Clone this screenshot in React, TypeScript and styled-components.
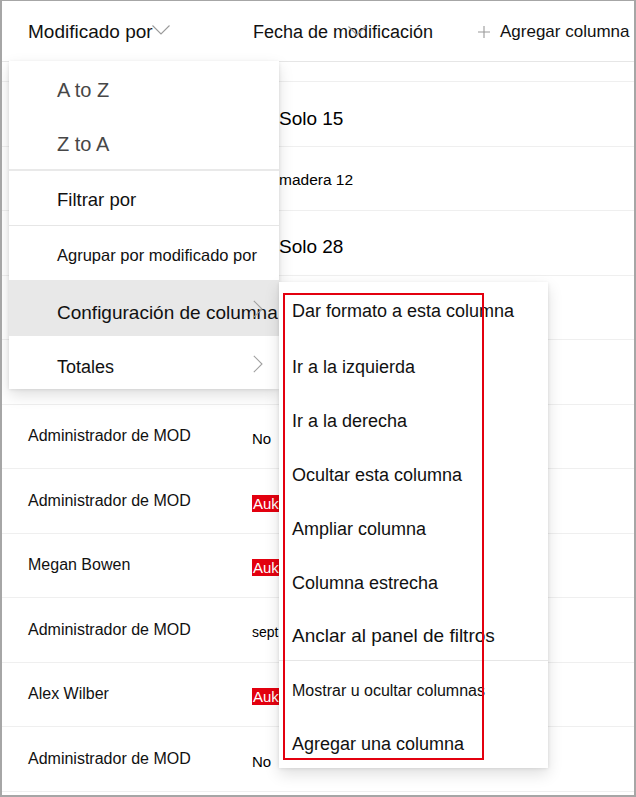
import React from "react";
import styled, { createGlobalStyle } from "styled-components";

const Global = createGlobalStyle`
  html, body { margin: 0; padding: 0; background: #fff; }
  body { font-family: "Liberation Sans", Arial, sans-serif; color: #111; }
  * { box-sizing: border-box; }
`;

const Frame = styled.div`
  position: relative;
  width: 636px;
  height: 797px;
  border: 2px solid #a6a6a6;
  border-top-width: 1px;
  overflow: hidden;
  background: #fff;
`;

const Header = styled.div`
  display: grid;
  grid-template-columns: 225px 225px 1fr;
  padding-left: 26px;
  height: 61px;
  border-bottom: 1px solid #e6e6e6;
  align-items: center;
`;

const HeaderCell = styled.div<{ $size: number }>`
  position: relative;
  display: flex;
  align-items: center;
  gap: 10px;
  font-size: ${(p) => p.$size}px;
  color: #111;
  white-space: nowrap;
  padding-top: 2px;
`;

const HeaderChevron = styled.svg<{ $left: number; $top: number }>`
  position: absolute;
  left: ${(p) => p.$left}px;
  top: ${(p) => p.$top}px;
  width: 18px;
  height: 10px;
  overflow: visible;
`;

const Row = styled.div<{ $h: number }>`
  display: grid;
  grid-template-columns: 225px 225px 1fr;
  padding-left: 26px;
  height: ${(p) => p.$h}px;
  border-bottom: 1px solid #efefef;
  align-items: center;
`;

const NameCell = styled.div`
  font-size: 16px;
  color: #111;
  white-space: nowrap;
`;

const ValueCell = styled.div<{ $size: number; $offset: number; $pt: number }>`
  font-size: ${(p) => p.$size}px;
  padding-left: ${(p) => p.$offset}px;
  padding-top: ${(p) => p.$pt}px;
  color: #000;
  white-space: nowrap;
  margin-left: -1px;
`;

const Flag = styled.span`
  background: #e3000f;
  color: #fff;
  padding: 0 1px;
`;

const Menu = styled.div`
  position: absolute;
  left: 7px;
  top: 60px;
  width: 270px;
  height: 328px;
  background: #fff;
  box-shadow: 0 6.4px 14.4px rgba(0, 0, 0, 0.13), 0 1.2px 3.6px rgba(0, 0, 0, 0.11);
  display: flex;
  flex-direction: column;
  z-index: 2;
`;

const MenuItem = styled.div<{
  $h: number;
  $size: number;
  $pt?: number;
  $muted?: boolean;
  $active?: boolean;
  $line?: boolean;
}>`
  position: relative;
  display: flex;
  align-items: center;
  height: ${(p) => p.$h}px;
  flex: none;
  padding-left: 48px;
  padding-top: ${(p) => p.$pt ?? 4}px;
  font-size: ${(p) => p.$size}px;
  color: ${(p) => (p.$muted ? "#474747" : "#111")};
  background: ${(p) => (p.$active ? "#e8e8e8" : "transparent")};
  border-bottom: ${(p) => (p.$line ? "1px solid #e6e6e6" : "none")};
  white-space: nowrap;
`;

const GroupGap = styled.div`
  height: 2px;
  flex: none;
  background: #e9e9e9;
`;

const Chevron = styled.svg`
  position: absolute;
  left: 244px;
  top: 50%;
  margin-top: -8px;
  width: 10px;
  height: 18px;
`;

const SubMenu = styled.div`
  position: absolute;
  left: 277px;
  top: 281px;
  width: 269px;
  height: 486px;
  background: #fff;
  box-shadow: 0 6.4px 14.4px rgba(0, 0, 0, 0.13), 0 1.2px 3.6px rgba(0, 0, 0, 0.11);
  padding-top: 2px;
  display: flex;
  flex-direction: column;
  z-index: 3;
`;

const SubItem = styled.div<{ $h: number; $size: number; $pt: number; $line?: boolean }>`
  display: flex;
  align-items: center;
  flex: none;
  height: ${(p) => p.$h}px;
  padding-left: 13px;
  padding-top: ${(p) => p.$pt}px;
  font-size: ${(p) => p.$size}px;
  color: #111;
  white-space: nowrap;
  border-bottom: ${(p) => (p.$line ? "1px solid #e6e6e6" : "none")};
`;

const Highlight = styled.div`
  position: absolute;
  left: 4px;
  top: 11px;
  width: 201px;
  height: 467px;
  border: 2px solid #e3000f;
  pointer-events: none;
`;

const Down = ({ left, top }: { left: number; top: number }) => (
  <HeaderChevron $left={left} $top={top} viewBox="0 0 18 10">
    <path d="M0.5 0.5 L9 9 L17.5 0.5" fill="none" stroke="#9a9a9a" strokeWidth="1.1" />
  </HeaderChevron>
);

const Right = () => (
  <Chevron viewBox="0 0 10 18">
    <path d="M0.8 0.8 L9 9 L0.8 17.2" fill="none" stroke="#a0a0a0" strokeWidth="1.1" />
  </Chevron>
);

const Plus = () => (
  <svg width="12" height="12" viewBox="0 0 12 12">
    <path d="M6 0 V12 M0 6 H12" stroke="#9a9a9a" strokeWidth="1.1" />
  </svg>
);

type RowData = { name: string; value?: React.ReactNode; size?: number; offset?: number; pt?: number };

const rows: RowData[] = [
  { name: "", value: "Solo 15", size: 19, offset: 27, pt: 10 },
  { name: "", value: "madera 12", size: 15.5, offset: 27, pt: 4 },
  { name: "", value: "Solo 28", size: 19, offset: 27, pt: 9 },
  { name: "" },
  { name: "" },
  { name: "Administrador de MOD", value: "No", size: 15 },
  { name: "Administrador de MOD", value: <Flag>Auk</Flag>, size: 15 },
  { name: "Megan Bowen", value: <Flag>Auk</Flag>, size: 15 },
  { name: "Administrador de MOD", value: "sept.", size: 14 },
  { name: "Alex Wilber", value: <Flag>Auk</Flag>, size: 15 },
  { name: "Administrador de MOD", value: "No", size: 15 },
  { name: "" },
];

const subItems: { label: string; size: number; h: number; pt: number; line?: boolean }[] = [
  { label: "Dar formato a esta columna", size: 18, h: 55, pt: 0 },
  { label: "Ir a la izquierda", size: 18, h: 54, pt: 2 },
  { label: "Ir a la derecha", size: 18, h: 54, pt: 2 },
  { label: "Ocultar esta columna", size: 18, h: 54, pt: 2 },
  { label: "Ampliar columna", size: 18, h: 54, pt: 2 },
  { label: "Columna estrecha", size: 18, h: 54, pt: 2 },
  { label: "Anclar al panel de filtros", size: 19, h: 52, pt: 2, line: true },
  { label: "Mostrar u ocultar columnas", size: 16, h: 54, pt: 5 },
  { label: "Agregar una columna", size: 18, h: 53, pt: 6 },
];

export default function App() {
  return (
    <>
      <Global />
      <Frame>
        <Header>
          <HeaderCell $size={19}>
            Modificado por
            <Down left={124} top={6} />
          </HeaderCell>
          <HeaderCell $size={18}>
            Fecha de modificación
            <Down left={95} top={6} />
          </HeaderCell>
          <HeaderCell $size={17}>
            <Plus />
            Agregar columna
          </HeaderCell>
        </Header>
        <Row $h={20} />
        {rows.map((r, i) => (
          <Row key={i} $h={64.5}>
            <NameCell>{r.name}</NameCell>
            <ValueCell $size={r.size ?? 15} $offset={r.offset ?? 0} $pt={r.pt ?? 5}>
              {r.value}
            </ValueCell>
            <div />
          </Row>
        ))}

        <Menu>
          <MenuItem $h={54} $size={20} $muted>A to Z</MenuItem>
          <MenuItem $h={54} $size={20} $muted>Z to A</MenuItem>
          <GroupGap />
          <MenuItem $h={55} $size={18.5} $line>
            Filtrar por
          </MenuItem>
          <MenuItem $h={54} $size={16.5} $pt={5}>Agrupar por modificado por</MenuItem>
          <MenuItem $h={56} $size={19} $pt={10} $active>
            Configuración de columna
            <Right />
          </MenuItem>
          <MenuItem $h={53} $size={18} $pt={10}>
            Totales
            <Right />
          </MenuItem>
        </Menu>

        <SubMenu>
          {subItems.map((s) => (
            <SubItem key={s.label} $h={s.h} $size={s.size} $pt={s.pt} $line={s.line}>
              {s.label}
            </SubItem>
          ))}
          <Highlight />
        </SubMenu>
      </Frame>
    </>
  );
}
